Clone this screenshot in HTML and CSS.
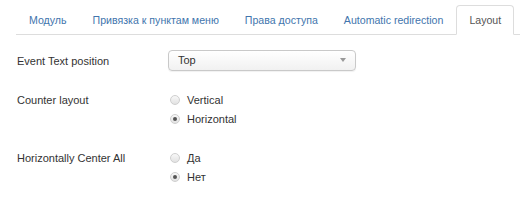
FILE: index.html
```html
<!DOCTYPE html>
<html lang="ru">
<head>
   <meta charset="utf-8">
   <title>Module - Layout</title>
   <link rel="stylesheet" href="styles.css">
</head>
<body>

   <!-- Tabs -->
   <ul class="nav-tabs">
      <li><a href="#">Модуль</a></li>
      <li><a href="#">Привязка к пунктам меню</a></li>
      <li><a href="#">Права доступа</a></li>
      <li><a href="#">Automatic redirection</a></li>
      <li class="active"><a href="#">Layout</a></li>
   </ul>

   <!-- Layout options -->
   <div class="form">
      <div class="form-row row-select">
         <div class="control-label">Event Text position</div>
         <div class="select">
            <span>Top</span>
            <span class="caret"></span>
         </div>
      </div>

      <div class="form-row">
         <div class="control-label">Counter layout</div>
         <div class="radios">
            <label class="radio"><input type="radio" name="counter"> Vertical</label>
            <label class="radio"><input type="radio" name="counter" checked> Horizontal</label>
         </div>
      </div>

      <div class="form-row">
         <div class="control-label">Horizontally Center All</div>
         <div class="radios">
            <label class="radio"><input type="radio" name="center"> Да</label>
            <label class="radio"><input type="radio" name="center" checked> Нет</label>
         </div>
      </div>
   </div>

</body>
</html>
```

FILE: styles.css
```css
* {
   margin: 0;
   padding: 0;
   box-sizing: border-box;
}

body {
   background: #fff;
   font-family: 'Liberation Sans', Arial, sans-serif;
   font-size: 11px;
   color: #333;
}

/* Tabs */
.nav-tabs {
   list-style: none;
   display: flex;
   margin: 5px 0 0 16px;
   border-bottom: 1px solid #ddd;
}

.nav-tabs li {
   margin-bottom: -1px;
   flex-shrink: 0;
}

.nav-tabs a {
   display: block;
   padding: 5px 12px;
   font-size: 10.6px;
   line-height: 18px;
   white-space: nowrap;
   color: #4275ad;
   text-decoration: none;
   border: 1px solid transparent;
   border-radius: 4px 4px 0 0;
}

.nav-tabs .active a {
   color: #555;
   background: #fff;
   border-color: #ddd;
   border-bottom-color: #fff;
}

/* Form rows */
.form {
   padding: 14px 0 0 17px;
}

.form-row {
   display: flex;
   align-items: flex-start;
   margin-bottom: 19px;
}

.row-select {
   align-items: center;
}

.control-label {
   width: 151px;
   line-height: 20px;
}

.row-select .control-label {
   padding-top: 2px;
}

/* Fake select box */
.select {
   width: 188px;
   height: 21px;
   border: 1px solid #c9c9c9;
   border-radius: 4px;
   background: linear-gradient(#fff, #f1f1f1);
   box-shadow: 0 1px 1px rgba(0, 0, 0, 0.06);
   display: flex;
   align-items: center;
   justify-content: space-between;
   padding: 0 9px;
   color: #333;
}

.caret {
   width: 0;
   height: 0;
   border-left: 3px solid transparent;
   border-right: 3px solid transparent;
   border-top: 4px solid #999;
}

/* Radios */
.radios {
   padding-left: 2px;
}

.radio {
   display: flex;
   align-items: center;
   height: 19.5px;
}

.radio input {
   appearance: none;
   -webkit-appearance: none;
   width: 10px;
   height: 10px;
   margin-right: 7px;
   border: 1px solid #cfcfcf;
   border-radius: 50%;
   background: linear-gradient(#f8f8f8, #e2e2e2);
   display: flex;
   align-items: center;
   justify-content: center;
}

.radio input:checked::after {
   content: '';
   width: 4px;
   height: 4px;
   border-radius: 50%;
   background: #555;
}
```
